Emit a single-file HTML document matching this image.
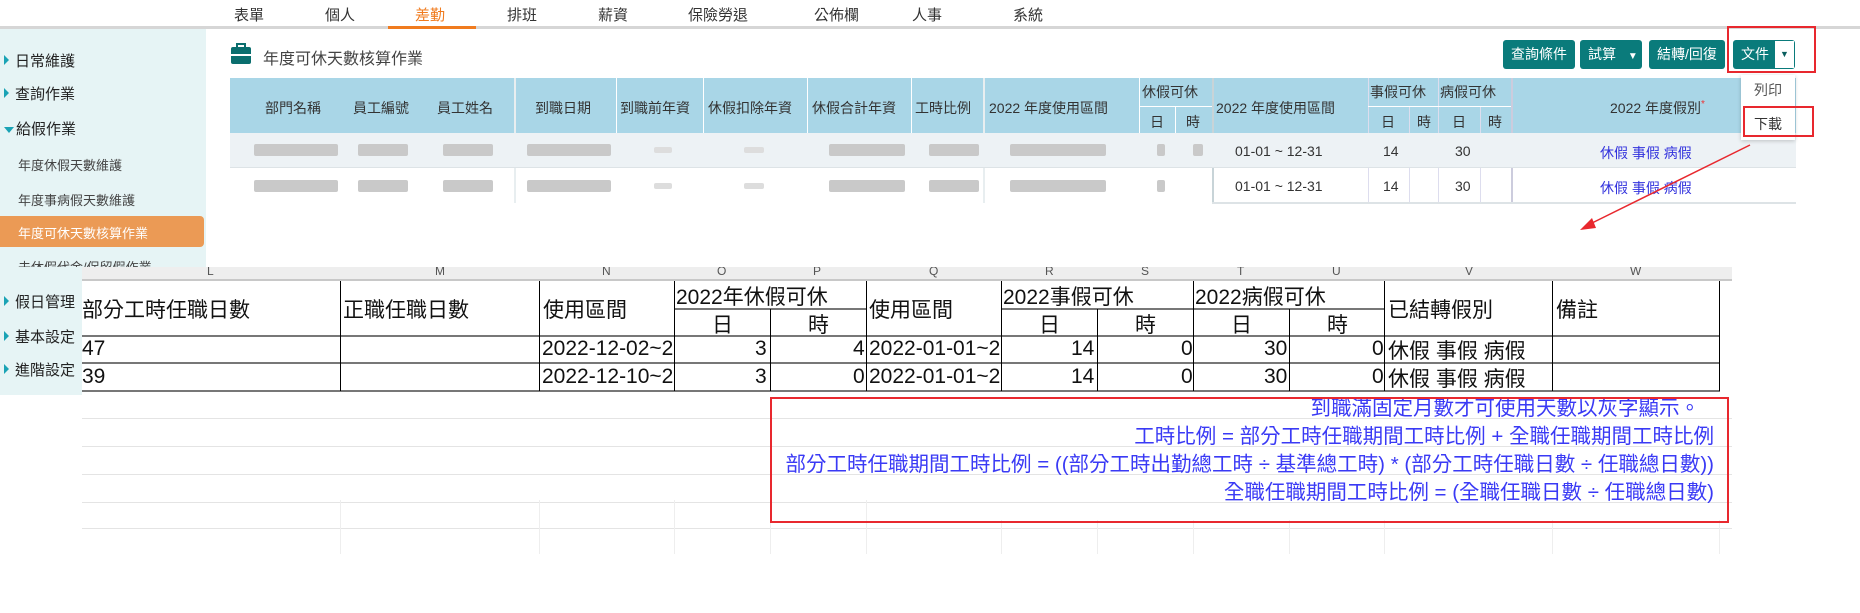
<!DOCTYPE html>
<html><head><meta charset="utf-8"><style>
*{margin:0;padding:0;box-sizing:border-box}
body{width:1860px;height:613px;background:#fff;position:relative;overflow:hidden;font-family:"Liberation Sans","Noto Sans CJK TC",sans-serif;color:#333}
.a{position:absolute;white-space:nowrap}
.nav{font-size:15px;top:4px;color:#333}
.sb{font-size:15px;color:#222}
.sbs{font-size:13px;color:#444}
.tri{display:inline-block;width:0;height:0;border-top:5px solid transparent;border-bottom:5px solid transparent;border-left:5px solid #1aa3b5;margin-right:6px;vertical-align:1px}
.th{font-size:14px;color:#333;text-align:center}
.btn{position:absolute;top:40px;height:29px;background:#0a7b7b;color:#fff;font-size:14px;line-height:29px;text-align:center;border-radius:3px}
.bl{position:absolute;background:#c9c9c9;border-radius:2px;height:12px}
.vl{position:absolute;width:1px;background:#fff}
.xl{font-size:21px;color:#111}
.sg{position:absolute;background:#000}
.bt{font-size:20.5px;color:#3a3af5;right:146px}
</style></head><body>
<!-- top nav -->
<div class="a nav" style="left:234px">表單</div>
<div class="a nav" style="left:325px">個人</div>
<div class="a nav" style="left:415px;color:#f07b1e">差勤</div>
<div class="a nav" style="left:507px">排班</div>
<div class="a nav" style="left:598px">薪資</div>
<div class="a nav" style="left:688px">保險勞退</div>
<div class="a nav" style="left:814px">公佈欄</div>
<div class="a nav" style="left:912px">人事</div>
<div class="a nav" style="left:1013px">系統</div>
<div class="a" style="left:0;top:26px;width:1860px;height:3px;background:#d6d6d6"></div>
<div class="a" style="left:388px;top:26px;width:88px;height:3px;background:#f07b1e"></div>
<!-- sidebar -->
<div class="a" style="left:0;top:29px;width:206px;height:239px;background:#e6f4f5"></div>
<div class="a" style="left:0;top:268px;width:82px;height:127px;background:#e6f4f5"></div>
<div class="a sb" style="left:4px;top:50px"><span class="tri"></span>日常維護</div>
<div class="a sb" style="left:4px;top:83px"><span class="tri"></span>查詢作業</div>
<div class="a sb" style="left:4px;top:118px"><span class="tri" style="border-left:5px solid transparent;border-right:5px solid transparent;border-top:6px solid #1aa3b5;border-bottom:0;margin-right:2px"></span>給假作業</div>
<div class="a sbs" style="left:18px;top:155px">年度休假天數維護</div>
<div class="a sbs" style="left:18px;top:190px">年度事病假天數維護</div>
<div class="a" style="left:0;top:216px;width:204px;height:31px;background:#eb9a55;border-radius:0 4px 4px 0"></div>
<div class="a sbs" style="left:18px;top:223px;color:#fff">年度可休天數核算作業</div>
<div class="a sbs" style="left:18px;top:257px;height:10px;overflow:hidden">未休假代金/保留假作業</div>
<div class="a sb" style="left:4px;top:291px"><span class="tri"></span>假日管理</div>
<div class="a sb" style="left:4px;top:326px"><span class="tri"></span>基本設定</div>
<div class="a sb" style="left:4px;top:359px"><span class="tri"></span>進階設定</div>
<!-- title -->
<div class="a" style="left:231px;top:47px;width:20px;height:17px;background:#0a6e6e;border-radius:2px"></div>
<div class="a" style="left:236px;top:43px;width:10px;height:5px;border:2px solid #0a6e6e;border-bottom:0"></div>
<div class="a" style="left:231px;top:54px;width:20px;height:2px;background:#fff"></div>
<div class="a" style="left:263px;top:45px;font-size:16px;color:#444">年度可休天數核算作業</div>
<!-- buttons -->
<div class="btn" style="left:1503px;width:72px">查詢條件</div>
<div class="btn" style="left:1580px;width:62px;text-align:left;padding-left:8px">試算 <span style="font-size:10px;margin-left:8px">▼</span></div>
<div class="btn" style="left:1649px;width:76px">結轉/回復</div>
<div class="btn" style="left:1733px;width:62px;text-align:left;padding-left:8px">文件</div>
<div class="a" style="left:1775px;top:41px;width:19px;height:27px;background:#fff;font-size:9px;line-height:27px;text-align:center;color:#0a5e5e">▼</div>
<div class="a" style="left:1727px;top:26px;width:89px;height:47px;border:2px solid #e8282e"></div>
<!-- table header -->
<div class="a" style="left:230px;top:78px;width:1566px;height:55px;background:#a9d6e7"></div>
<div class="vl" style="left:514px;top:78px;height:125px;width:2px;background:#e8eef0"></div>
<div class="vl" style="left:616px;top:78px;height:55px"></div>
<div class="vl" style="left:703px;top:78px;height:55px"></div>
<div class="vl" style="left:807px;top:78px;height:55px"></div>
<div class="vl" style="left:911px;top:78px;height:55px"></div>
<div class="vl" style="left:983px;top:78px;height:125px;width:2px;background:#e8eef0"></div>
<div class="vl" style="left:1139px;top:78px;height:55px"></div>
<div class="vl" style="left:1175px;top:107px;height:26px"></div>
<div class="vl" style="left:1212px;top:78px;height:125px;width:2px;background:#c8d4d8"></div>
<div class="vl" style="left:1368px;top:78px;height:125px;background:#dde"></div>
<div class="vl" style="left:1409px;top:107px;height:96px;background:#dde"></div>
<div class="vl" style="left:1438px;top:78px;height:125px;background:#dde"></div>
<div class="vl" style="left:1480px;top:107px;height:96px;background:#dde"></div>
<div class="vl" style="left:1511px;top:78px;height:125px;width:2px;background:#ccd"></div>
<div class="a" style="left:1139px;top:106px;width:73px;height:1px;background:#fff"></div>
<div class="a" style="left:1368px;top:106px;width:143px;height:1px;background:#fff"></div>
<div class="a th" style="left:265px;top:98px">部門名稱</div>
<div class="a th" style="left:353px;top:98px">員工編號</div>
<div class="a th" style="left:437px;top:98px">員工姓名</div>
<div class="a th" style="left:535px;top:98px">到職日期</div>
<div class="a th" style="left:620px;top:98px">到職前年資</div>
<div class="a th" style="left:708px;top:98px">休假扣除年資</div>
<div class="a th" style="left:812px;top:98px">休假合計年資</div>
<div class="a th" style="left:915px;top:98px">工時比例</div>
<div class="a th" style="left:989px;top:98px">2022 年度使用區間</div>
<div class="a th" style="left:1142px;top:82px">休假可休</div>
<div class="a th" style="left:1150px;top:112px">日</div><div class="a th" style="left:1186px;top:112px">時</div>
<div class="a th" style="left:1216px;top:98px">2022 年度使用區間</div>
<div class="a th" style="left:1370px;top:82px">事假可休</div>
<div class="a th" style="left:1440px;top:82px">病假可休</div>
<div class="a th" style="left:1381px;top:112px">日</div><div class="a th" style="left:1417px;top:112px">時</div>
<div class="a th" style="left:1452px;top:112px">日</div><div class="a th" style="left:1488px;top:112px">時</div>
<div class="a th" style="left:1610px;top:98px">2022 年度假別<span style="color:#e33;font-size:10px;vertical-align:6px">*</span></div>
<!-- rows -->
<div class="a" style="left:230px;top:133px;width:1566px;height:35px;background:#edf2f5"></div>
<div class="a" style="left:230px;top:167px;width:1566px;height:1px;background:#dde3e6"></div>
<div class="a" style="left:1212px;top:202px;width:584px;height:2px;background:#dde3e6"></div>
<div class="bl" style="left:254px;top:144px;width:84px"></div><div class="bl" style="left:358px;top:144px;width:50px"></div><div class="bl" style="left:443px;top:144px;width:50px"></div>
<div class="bl" style="left:527px;top:144px;width:84px"></div><div class="bl" style="left:654px;top:147px;width:18px;height:6px;background:#ddd"></div><div class="bl" style="left:744px;top:147px;width:20px;height:6px;background:#ddd"></div>
<div class="bl" style="left:829px;top:144px;width:76px"></div><div class="bl" style="left:929px;top:144px;width:50px"></div><div class="bl" style="left:1010px;top:144px;width:96px"></div><div class="bl" style="left:1157px;top:144px;width:8px"></div><div class="bl" style="left:1193px;top:144px;width:10px"></div>
<div class="bl" style="left:254px;top:180px;width:84px"></div><div class="bl" style="left:358px;top:180px;width:50px"></div><div class="bl" style="left:443px;top:180px;width:50px"></div>
<div class="bl" style="left:527px;top:180px;width:84px"></div><div class="bl" style="left:654px;top:183px;width:18px;height:6px;background:#ddd"></div><div class="bl" style="left:744px;top:183px;width:20px;height:6px;background:#ddd"></div>
<div class="bl" style="left:829px;top:180px;width:76px"></div><div class="bl" style="left:929px;top:180px;width:50px"></div><div class="bl" style="left:1010px;top:180px;width:96px"></div><div class="bl" style="left:1157px;top:180px;width:8px"></div>
<div class="a" style="left:1235px;top:143px;font-size:14px">01-01 ~ 12-31</div>
<div class="a" style="left:1235px;top:178px;font-size:14px">01-01 ~ 12-31</div>
<div class="a" style="left:1383px;top:143px;font-size:14px">14</div><div class="a" style="left:1383px;top:178px;font-size:14px">14</div>
<div class="a" style="left:1455px;top:143px;font-size:14px">30</div><div class="a" style="left:1455px;top:178px;font-size:14px">30</div>
<div class="a" style="left:1600px;top:143px;font-size:14px;color:#3333dd">休假 事假 病假</div>
<div class="a" style="left:1600px;top:178px;font-size:14px;color:#3333dd">休假 事假 病假</div>
<!-- dropdown (on top) -->
<div class="a" style="left:1741px;top:75px;width:54px;height:65px;background:#fff;box-shadow:0 1px 4px rgba(0,0,0,.2)"></div>
<div class="a" style="left:1754px;top:80px;font-size:14px;color:#555">列印</div>
<div class="a" style="left:1754px;top:114px;font-size:14px;color:#333">下載</div>
<div class="a" style="left:1743px;top:106px;width:71px;height:31px;border:2px solid #e8282e"></div>
<!-- arrow -->
<svg class="a" style="left:0;top:0" width="1860" height="613"><line x1="1750" y1="145" x2="1590" y2="224" stroke="#e8282e" stroke-width="1.5"/><polygon points="1580,230 1592,218 1596,228" fill="#e8282e"/></svg>
<!-- spreadsheet -->
<div class="a" style="left:82px;top:267px;width:1650px;height:14px;background:#eeeeee;border-bottom:2px solid #c8c8c8;overflow:hidden;font-size:12px;color:#555">
<span class="a" style="left:125px;top:-3px">L</span><span class="a" style="left:353px;top:-3px">M</span><span class="a" style="left:520px;top:-3px">N</span><span class="a" style="left:635px;top:-3px">O</span><span class="a" style="left:731px;top:-3px">P</span><span class="a" style="left:847px;top:-3px">Q</span><span class="a" style="left:963px;top:-3px">R</span><span class="a" style="left:1059px;top:-3px">S</span><span class="a" style="left:1155px;top:-3px">T</span><span class="a" style="left:1250px;top:-3px">U</span><span class="a" style="left:1383px;top:-3px">V</span><span class="a" style="left:1548px;top:-3px">W</span></div>
<!-- faint grid -->
<div class="a" style="left:82px;top:418px;width:1650px;height:1px;background:#e4e4e4"></div>
<div class="a" style="left:82px;top:446px;width:1650px;height:1px;background:#e4e4e4"></div>
<div class="a" style="left:82px;top:474px;width:1650px;height:1px;background:#e4e4e4"></div>
<div class="a" style="left:82px;top:502px;width:1650px;height:1px;background:#e4e4e4"></div>
<div class="a" style="left:82px;top:528px;width:1650px;height:1px;background:#e4e4e4"></div>
<div class="a" style="left:340px;top:500px;width:1px;height:54px;background:#eee"></div>
<div class="a" style="left:539px;top:500px;width:1px;height:54px;background:#eee"></div>
<div class="a" style="left:674px;top:500px;width:1px;height:54px;background:#eee"></div>
<div class="a" style="left:770px;top:500px;width:1px;height:54px;background:#eee"></div>
<div class="a" style="left:866px;top:500px;width:1px;height:54px;background:#eee"></div>
<div class="a" style="left:1001px;top:520px;width:1px;height:34px;background:#eee"></div>
<div class="a" style="left:1097px;top:520px;width:1px;height:34px;background:#eee"></div>
<div class="a" style="left:1193px;top:520px;width:1px;height:34px;background:#eee"></div>
<div class="a" style="left:1289px;top:520px;width:1px;height:34px;background:#eee"></div>
<div class="a" style="left:1384px;top:520px;width:1px;height:34px;background:#eee"></div>
<div class="a" style="left:1552px;top:520px;width:1px;height:34px;background:#eee"></div>
<div class="a" style="left:1719px;top:520px;width:1px;height:34px;background:#eee"></div>
<!-- table borders -->
<div class="sg" style="left:82px;top:335px;width:1638px;height:2px;background:#777"></div>
<div class="sg" style="left:82px;top:362px;width:1638px;height:2px;background:#777"></div>
<div class="sg" style="left:82px;top:390px;width:1638px;height:2px;background:#777"></div>
<div class="sg" style="left:674px;top:308px;width:192px;height:2px;background:#777"></div>
<div class="sg" style="left:1001px;top:308px;width:383px;height:2px;background:#777"></div>
<div class="sg" style="left:340px;top:281px;width:1px;height:110px"></div>
<div class="sg" style="left:539px;top:281px;width:1px;height:110px"></div>
<div class="sg" style="left:674px;top:281px;width:1px;height:110px"></div>
<div class="sg" style="left:770px;top:309px;width:1px;height:82px"></div>
<div class="sg" style="left:866px;top:281px;width:1px;height:110px"></div>
<div class="sg" style="left:1001px;top:281px;width:1px;height:110px"></div>
<div class="sg" style="left:1097px;top:309px;width:1px;height:82px"></div>
<div class="sg" style="left:1193px;top:281px;width:1px;height:110px"></div>
<div class="sg" style="left:1289px;top:309px;width:1px;height:82px"></div>
<div class="sg" style="left:1384px;top:281px;width:1px;height:110px"></div>
<div class="sg" style="left:1552px;top:281px;width:1px;height:110px"></div>
<div class="sg" style="left:1719px;top:281px;width:1px;height:110px"></div>
<div class="a xl" style="left:82px;top:294px">部分工時任職日數</div>
<div class="a xl" style="left:343px;top:294px">正職任職日數</div>
<div class="a xl" style="left:543px;top:294px">使用區間</div>
<div class="a xl" style="left:676px;top:281px">2022年休假可休</div>
<div class="a xl" style="left:712px;top:309px">日</div><div class="a xl" style="left:808px;top:309px">時</div>
<div class="a xl" style="left:869px;top:294px">使用區間</div>
<div class="a xl" style="left:1003px;top:281px">2022事假可休</div>
<div class="a xl" style="left:1039px;top:309px">日</div><div class="a xl" style="left:1135px;top:309px">時</div>
<div class="a xl" style="left:1195px;top:281px">2022病假可休</div>
<div class="a xl" style="left:1231px;top:309px">日</div><div class="a xl" style="left:1327px;top:309px">時</div>
<div class="a xl" style="left:1388px;top:294px">已結轉假別</div>
<div class="a xl" style="left:1556px;top:294px">備註</div>
<div class="a xl" style="left:82px;top:337px">47</div><div class="a xl" style="left:82px;top:365px">39</div>
<div class="a xl" style="left:542px;top:337px;width:131px;overflow:hidden">2022-12-02~2023</div>
<div class="a xl" style="left:542px;top:365px;width:131px;overflow:hidden">2022-12-10~2023</div>
<div class="a xl" style="left:755px;top:337px">3</div><div class="a xl" style="left:755px;top:365px">3</div>
<div class="a xl" style="left:853px;top:337px">4</div><div class="a xl" style="left:853px;top:365px">0</div>
<div class="a xl" style="left:869px;top:337px;width:131px;overflow:hidden">2022-01-01~2022</div>
<div class="a xl" style="left:869px;top:365px;width:131px;overflow:hidden">2022-01-01~2022</div>
<div class="a xl" style="left:1071px;top:337px">14</div><div class="a xl" style="left:1071px;top:365px">14</div>
<div class="a xl" style="left:1181px;top:337px">0</div><div class="a xl" style="left:1181px;top:365px">0</div>
<div class="a xl" style="left:1264px;top:337px">30</div><div class="a xl" style="left:1264px;top:365px">30</div>
<div class="a xl" style="left:1372px;top:337px">0</div><div class="a xl" style="left:1372px;top:365px">0</div>
<div class="a xl" style="left:1388px;top:335px">休假 事假 病假</div>
<div class="a xl" style="left:1388px;top:363px">休假 事假 病假</div>
<!-- red box notes -->
<div class="a bt" style="top:391px;right:160px">到職滿固定月數才可使用天數以灰字顯示。</div>
<div class="a bt" style="top:419px">工時比例 = 部分工時任職期間工時比例 + 全職任職期間工時比例</div>
<div class="a bt" style="top:447px">部分工時任職期間工時比例 = ((部分工時出勤總工時 ÷ 基準總工時) * (部分工時任職日數 ÷ 任職總日數))</div>
<div class="a bt" style="top:475px">全職任職期間工時比例 =  (全職任職日數 ÷ 任職總日數)</div>
<div class="a" style="left:770px;top:397px;width:959px;height:126px;border:2px solid #e8282e"></div>
</body></html>
